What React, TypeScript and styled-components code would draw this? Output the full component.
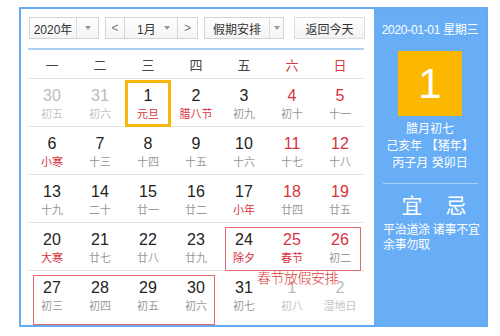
import React from "react";
import styled, { createGlobalStyle } from "styled-components";

const GlobalStyle = createGlobalStyle`
  html, body {
    margin: 0;
    padding: 0;
    background: #fff;
    font-family: "Liberation Sans", "Noto Sans CJK SC", sans-serif;
  }
`;

const Page = styled.div`
  width: 500px;
  height: 336px;
  padding: 7px 0 0 19px;
  box-sizing: border-box;
`;

const Frame = styled.div`
  width: 469px;
  height: 320px;
  border: 2px solid #64aaf4;
  box-sizing: border-box;
  display: flex;
`;

const Main = styled.div`
  width: 353px;
  padding: 8px 0 0 7px;
  box-sizing: border-box;
  background: #fff;
`;

const Toolbar = styled.div`
  display: flex;
  align-items: center;
  gap: 6px;
  padding-left: 1px;
  height: 22px;
`;

const Select = styled.div<{ $w: number; $arrow: number }>`
  width: ${(p) => p.$w}px;
  height: 22px;
  box-sizing: border-box;
  border: 1px solid #d4d4d4;
  background: linear-gradient(#fff, #f4f4f4);
  display: grid;
  grid-template-columns: 1fr ${(p) => p.$arrow}px;
  font-size: 12px;
  color: #333;
`;

const SelectText = styled.span`
  display: flex;
  align-items: center;
  justify-content: center;
  border-right: 1px solid #dcdcdc;
`;

const Caret = styled.span`
  display: flex;
  align-items: center;
  justify-content: center;
  &::after {
    content: "";
    border-left: 3px solid transparent;
    border-right: 3px solid transparent;
    border-top: 4px solid #999;
  }
`;

const MonthGroup = styled.div`
  display: flex;
  height: 22px;
`;

const Arrow = styled.span<{ $w: number }>`
  width: ${(p) => p.$w}px;
  box-sizing: border-box;
  border: 1px solid #d4d4d4;
  background: linear-gradient(#fff, #f4f4f4);
  display: flex;
  align-items: center;
  justify-content: center;
  color: #777;
  font-size: 12px;
`;

const MonthSelect = styled(Select)`
  border-left: none;
  border-right: none;
  padding-left: 6px;
`;

const MonthText = styled(SelectText)`
  border-right: none;
  justify-content: flex-start;
  padding-left: 6px;
`;

const Button = styled.div`
  width: 71px;
  height: 22px;
  margin-left: 4px;
  box-sizing: border-box;
  border: 1px solid #dcdcdc;
  background: linear-gradient(#fff, #f2f2f2);
  display: flex;
  align-items: center;
  justify-content: center;
  font-size: 12px;
  color: #333;
`;

const BlueRule = styled.div`
  width: 336px;
  height: 2px;
  margin-top: 9px;
  background: #a9d0f3;
`;

const WeekRow = styled.div`
  width: 336px;
  height: 29px;
  display: grid;
  grid-template-columns: repeat(7, 48px);
  border-bottom: 1px solid #e3e3e3;
  box-sizing: border-box;
`;

const WeekDay = styled.span<{ $red?: boolean }>`
  display: flex;
  align-items: center;
  justify-content: center;
  font-size: 13px;
  color: ${(p) => (p.$red ? "#d9393f" : "#444")};
`;

const Days = styled.div`
  position: relative;
  width: 336px;
  display: grid;
  grid-template-columns: repeat(7, 48px);
  grid-auto-rows: 48px;
`;

const Cell = styled.div<{ $last: boolean; $today?: boolean }>`
  box-sizing: border-box;
  border-bottom: ${(p) => (p.$last ? "none" : "1px solid #e3e3e3")};
  display: flex;
  flex-direction: column;
  align-items: center;
  padding-top: 8px;
  ${(p) =>
    p.$today &&
    `
    border: 3px solid #f7b80c;
    margin: 1px 1px 0 1px;
    padding-top: 4px;
  `}
`;

const Num = styled.span<{ $tone: string }>`
  font-size: 16px;
  line-height: 18px;
  color: ${(p) => p.$tone};
`;

const Lunar = styled.span<{ $tone: string }>`
  font-size: 11px;
  line-height: 16px;
  margin-top: 1px;
  color: ${(p) => p.$tone};
`;

const HolidayBox = styled.div<{ $l: number; $t: number; $w: number; $h: number }>`
  position: absolute;
  left: ${(p) => p.$l}px;
  top: ${(p) => p.$t}px;
  width: ${(p) => p.$w}px;
  height: ${(p) => p.$h}px;
  border: 1px solid #e06a6a;
  box-sizing: border-box;
  pointer-events: none;
`;

const HolidayLabel = styled.span`
  position: absolute;
  left: 229px;
  top: 188px;
  font-size: 14px;
  color: #e03a3a;
  font-family: "Noto Sans CJK SC", sans-serif;
  font-weight: 300;
  letter-spacing: -0.5px;
`;

const Side = styled.div`
  flex: 1;
  background: #67aef7;
  color: #fff;
  display: flex;
  flex-direction: column;
  align-items: center;
  padding: 13px 0 0;
  box-sizing: border-box;
  white-space: nowrap;
`;

const DateLine = styled.div`
  font-size: 12px;
  line-height: 16px;
  letter-spacing: -0.3px;
`;

const BigDay = styled.div`
  width: 64px;
  height: 65px;
  margin-top: 13px;
  background: #fcb800;
  display: flex;
  align-items: center;
  justify-content: center;
  font-size: 42px;
  font-family: "Liberation Sans", sans-serif;
`;

const Info = styled.div`
  margin-top: 5px;
  font-size: 12px;
  line-height: 17px;
  text-align: center;
`;

const Divider = styled.div`
  width: 95px;
  height: 1px;
  margin-top: 11px;
  background: rgba(255, 255, 255, 0.45);
`;

const Signs = styled.div`
  display: flex;
  justify-content: center;
  gap: 23px;
  padding-left: 8px;
  margin-top: 8px;
  font-size: 21px;
  line-height: 28px;
`;

const Advice = styled.div`
  align-self: stretch;
  margin-top: 3px;
  font-size: 12px;
  line-height: 15px;
  padding-left: 9px;
  letter-spacing: -0.3px;
`;

type Day = { n: string; l: string; numTone?: string; lunarTone?: string; today?: boolean };

const DARK = "#222";
const GREY = "#999";
const PALE = "#bbb";
const PALE_L = "#c4c4c4";
const RED = "#d9313b";

const days: Day[] = [
  { n: "30", l: "初五", numTone: PALE, lunarTone: PALE_L },
  { n: "31", l: "初六", numTone: PALE, lunarTone: PALE_L },
  { n: "1", l: "元旦", lunarTone: RED, today: true },
  { n: "2", l: "腊八节", lunarTone: RED },
  { n: "3", l: "初九" },
  { n: "4", l: "初十", numTone: RED },
  { n: "5", l: "十一", numTone: RED },
  { n: "6", l: "小寒", lunarTone: RED },
  { n: "7", l: "十三" },
  { n: "8", l: "十四" },
  { n: "9", l: "十五" },
  { n: "10", l: "十六" },
  { n: "11", l: "十七", numTone: RED },
  { n: "12", l: "十八", numTone: RED },
  { n: "13", l: "十九" },
  { n: "14", l: "二十" },
  { n: "15", l: "廿一" },
  { n: "16", l: "廿二" },
  { n: "17", l: "小年", lunarTone: RED },
  { n: "18", l: "廿四", numTone: RED },
  { n: "19", l: "廿五", numTone: RED },
  { n: "20", l: "大寒", lunarTone: RED },
  { n: "21", l: "廿七" },
  { n: "22", l: "廿八" },
  { n: "23", l: "廿九" },
  { n: "24", l: "除夕", lunarTone: RED },
  { n: "25", l: "春节", numTone: RED, lunarTone: RED },
  { n: "26", l: "初二", numTone: RED },
  { n: "27", l: "初三" },
  { n: "28", l: "初四" },
  { n: "29", l: "初五" },
  { n: "30", l: "初六" },
  { n: "31", l: "初七" },
  { n: "1", l: "初八", numTone: PALE, lunarTone: PALE_L },
  { n: "2", l: "湿地日", numTone: PALE, lunarTone: PALE_L },
];

const weekDays = ["一", "二", "三", "四", "五", "六", "日"];

const App: React.FC = () => {
  return (
    <Page>
      <GlobalStyle />
      <Frame>
        <Main>
          <Toolbar>
            <Select $w={70} $arrow={21}>
              <SelectText>2020年</SelectText>
              <Caret />
            </Select>
            <MonthGroup>
              <Arrow $w={20}>&lt;</Arrow>
              <MonthSelect $w={52} $arrow={20}>
                <MonthText>1月</MonthText>
                <Caret />
              </MonthSelect>
              <Arrow $w={21}>&gt;</Arrow>
            </MonthGroup>
            <Select $w={80} $arrow={13}>
              <SelectText>假期安排</SelectText>
              <Caret />
            </Select>
            <Button>返回今天</Button>
          </Toolbar>
          <BlueRule />
          <WeekRow>
            {weekDays.map((d, i) => (
              <WeekDay key={d} $red={i >= 5}>
                {d}
              </WeekDay>
            ))}
          </WeekRow>
          <Days>
            {days.map((d, i) => (
              <Cell key={i} $last={i >= 28} $today={d.today}>
                <Num $tone={d.numTone ?? DARK}>{d.n}</Num>
                <Lunar $tone={d.lunarTone ?? GREY}>{d.l}</Lunar>
              </Cell>
            ))}
            <HolidayBox $l={197} $t={148} $w={136} $h={44} />
            <HolidayBox $l={5} $t={196} $w={182} $h={50} />
            <HolidayLabel>春节放假安排</HolidayLabel>
          </Days>
        </Main>
        <Side>
          <DateLine>2020-01-01 星期三</DateLine>
          <BigDay>1</BigDay>
          <Info>
            腊月初七
            <br />
            己亥年 【猪年】
            <br />
            丙子月 癸卯日
          </Info>
          <Divider />
          <Signs>
            <span>宜</span>
            <span>忌</span>
          </Signs>
          <Advice>
            平治道涂 诸事不宜
            <br />
            余事勿取
          </Advice>
        </Side>
      </Frame>
    </Page>
  );
};

export default App;
